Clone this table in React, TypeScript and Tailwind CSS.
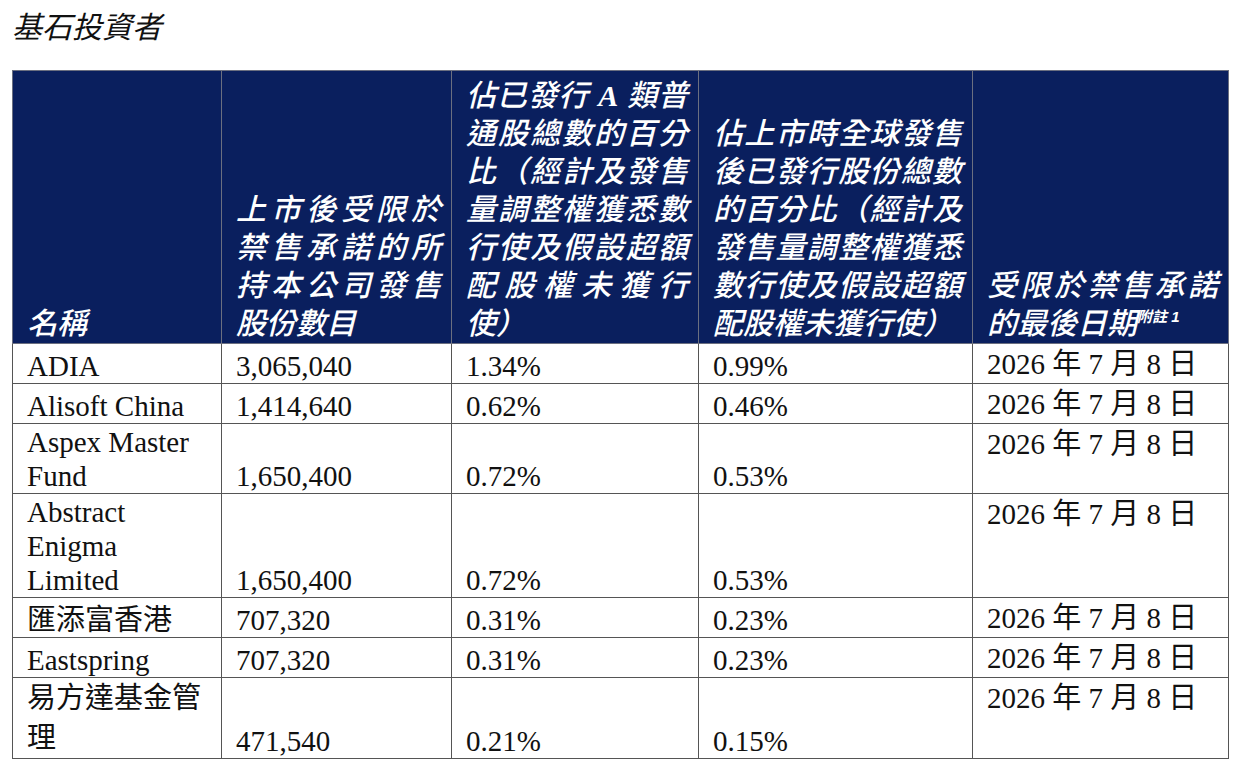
type Row = {
  name: string;
  shares: string;
  pctA: string;
  pctAll: string;
  date: string;
  h: string;
  nameLeading?: string;
};

const ROWS: Row[] = [
  { name: "ADIA", shares: "3,065,040", pctA: "1.34%", pctAll: "0.99%", date: "2026 年 7 月 8 日", h: "h-[40px]" },
  { name: "Alisoft China", shares: "1,414,640", pctA: "0.62%", pctAll: "0.46%", date: "2026 年 7 月 8 日", h: "h-[40px]" },
  { name: "Aspex Master Fund", shares: "1,650,400", pctA: "0.72%", pctAll: "0.53%", date: "2026 年 7 月 8 日", h: "h-[70px]" },
  { name: "Abstract Enigma Limited", shares: "1,650,400", pctA: "0.72%", pctAll: "0.53%", date: "2026 年 7 月 8 日", h: "h-[104px]" },
  { name: "匯添富香港", shares: "707,320", pctA: "0.31%", pctAll: "0.23%", date: "2026 年 7 月 8 日", h: "h-[40px]" },
  { name: "Eastspring", shares: "707,320", pctA: "0.31%", pctAll: "0.23%", date: "2026 年 7 月 8 日", h: "h-[40px]" },
  { name: "易方達基金管理", shares: "471,540", pctA: "0.21%", pctAll: "0.15%", date: "2026 年 7 月 8 日", h: "h-[80px]", nameLeading: "leading-[40px]" },
];

const serif = "font-['Liberation_Serif','Noto_Sans_CJK_TC',serif]";
const sans = "font-['Liberation_Sans','Noto_Sans_CJK_TC',sans-serif]";

const th =
  "border border-[#6b6f80] align-bottom pl-[14px] pr-[10px] pb-0 text-justify text-[30px] leading-[38px] italic font-medium text-white";
const td =
  "border border-[#555555] pl-[14px] pr-[10px] py-0 text-[29px] leading-[34px] text-[#111111]";

export default function App() {
  return (
    <div className={`min-h-[760px] w-[1237px] bg-white pl-[12px] pt-[8px] ${sans}`}>
      {/* Title */}
      <h1 className="mb-[22px] text-[30px] leading-[40px] font-normal italic text-[#111111]">
        基石投資者
      </h1>

      <table className="w-[1216px] table-fixed border-collapse">
        <colgroup>
          <col className="w-[209px]" />
          <col className="w-[230px]" />
          <col className="w-[247px]" />
          <col className="w-[274px]" />
          <col className="w-[256px]" />
        </colgroup>

        <thead>
          <tr className="h-[273px] bg-[#0a1f5e]">
            <th className={th}>名稱</th>
            <th className={th}>上市後受限於禁售承諾的所持本公司發售股份數目</th>
            <th className={th}>
              佔已發行{" "}
              <span className="font-['Liberation_Serif',serif] font-bold">A</span>{" "}
              類普通股總數的百分比（經計及發售量調整權獲悉數行使及假設超額配股權未獲行使）
            </th>
            <th className={th}>
              佔上市時全球發售後已發行股份總數的百分比（經計及發售量調整權獲悉數行使及假設超額配股權未獲行使）
            </th>
            <th className={th}>
              受限於禁售承諾的最後日期
              <sup className="relative -top-[12px] text-[15px] font-bold">附註 1</sup>
            </th>
          </tr>
        </thead>

        <tbody className={serif}>
          {ROWS.map((r) => (
            <tr key={r.name} className={r.h}>
              <td className={`${td} align-bottom ${r.nameLeading ?? ""}`}>{r.name}</td>
              <td className={`${td} align-bottom`}>{r.shares}</td>
              <td className={`${td} align-bottom`}>{r.pctA}</td>
              <td className={`${td} align-bottom`}>{r.pctAll}</td>
              <td className={`${td} align-top pt-[3px]`}>{r.date}</td>
            </tr>
          ))}
        </tbody>
      </table>
    </div>
  );
}
